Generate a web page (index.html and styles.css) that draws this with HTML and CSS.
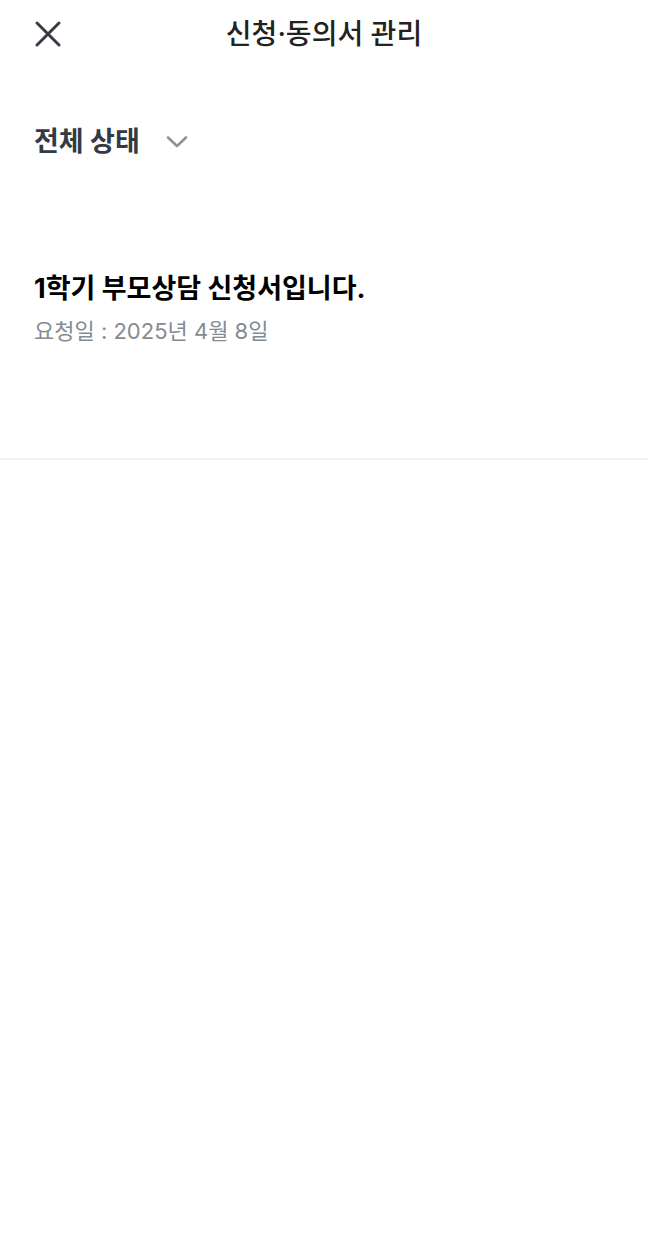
FILE: index.html
```html
<!DOCTYPE html>
<html lang="ko">

<head>
    <meta name="viewport" content="width=device-width, initial-scale=1.0, user-scalable=no" />
    <title>신청·동의서 관리</title>
    <link rel="stylesheet" href="styles.css">
</head>

<body>
    <header class="topbar">
        <button class="close-btn" aria-label="닫기">
            <svg width="28" height="28" viewBox="0 0 28 28">
                <path d="M3 3 L25 25 M25 3 L3 25" stroke="#353c44" stroke-width="3" stroke-linecap="round" fill="none" />
            </svg>
        </button>
        <h1 class="topbar-title">신청·동의서 관리</h1>
    </header>

    <div class="filter">
        <span class="filter-label">전체 상태</span>
        <svg class="filter-arrow" width="22" height="14" viewBox="0 0 22 14">
            <path d="M2 2.5 L11 11 L20 2.5" stroke="#8b939c" stroke-width="2.6" stroke-linecap="round" stroke-linejoin="round" fill="none" />
        </svg>
    </div>

    <ul class="doc-list">
        <li class="doc-item">
            <p class="doc-title">1학기 부모상담 신청서입니다.</p>
            <p class="doc-date">요청일 : 2025년 4월 8일</p>
        </li>
    </ul>
</body>

</html>
```

FILE: styles.css
```css
html {
    font-family: Inter, "Noto Sans CJK KR", sans-serif;
}

body {
    margin: 0;
    background-color: #ffffff;
}

.topbar {
    position: relative;
    height: 68px;
    display: flex;
    align-items: center;
    justify-content: center;
}

.close-btn {
    position: absolute;
    left: 34px;
    top: 20px;
    padding: 0;
    border: none;
    background: none;
    display: flex;
}

.topbar-title {
    margin: 0;
    font-size: 28px;
    line-height: 34px;
    font-weight: 500;
    color: #222222;
}

.filter {
    display: flex;
    align-items: center;
    padding: 52px 34px 0;
    height: 44px;
}

.filter-label {
    font-size: 27px;
    line-height: 34px;
    font-weight: 700;
    color: #333a44;
}

.filter-arrow {
    margin-left: 26px;
}

.doc-list {
    list-style: none;
    margin: 0;
    padding: 0;
}

.doc-item {
    padding: 108px 34px 112px;
    border-bottom: 2px solid #f1f1f1;
}

.doc-title {
    margin: 0;
    font-size: 27px;
    line-height: 34px;
    font-weight: 700;
    color: #000000;
}

.doc-date {
    margin: 10px 0 0;
    font-size: 22px;
    line-height: 30px;
    color: #858b92;
}
```
